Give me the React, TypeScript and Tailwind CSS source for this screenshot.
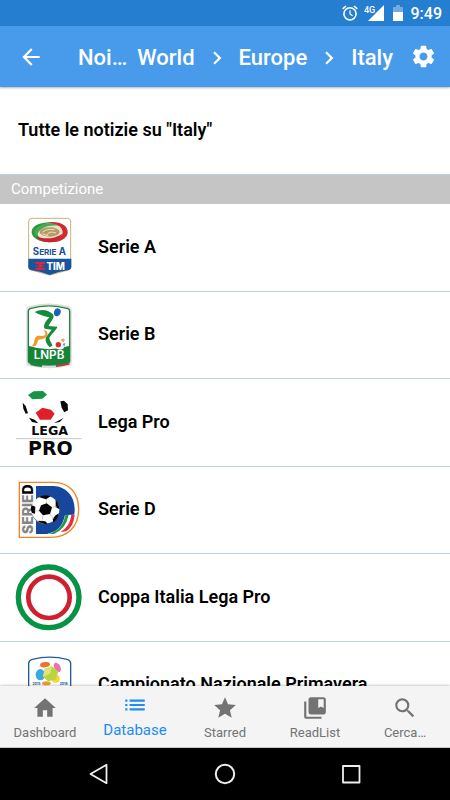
import type { ReactNode } from "react";
import {
  MdArrowBack,
  MdChevronRight,
  MdCollectionsBookmark,
  MdHome,
  MdList,
  MdSearch,
  MdSettings,
  MdStar,
} from "react-icons/md";

function Logo({ children }: { children: ReactNode }) {
  return (
    <svg viewBox="0 0 240 255" className="h-[85px] w-20 shrink-0" aria-hidden="true">
      {children}
    </svg>
  );
}

const LOGO_FONT = "Inter, Roboto, sans-serif";

function SerieALogo() {
  return (
    <Logo>
      <path d="M56 48 Q57 40 66 40 H172 Q181 40 182 48 V188 Q182 193 175 195 L119 210 L63 195 Q56 193 56 188 Z" fill="#fff" stroke="#c9b27a" strokeWidth="3" />
      <path d="M55 161 H184 V187 Q184 193 177 195 Q146 199 119 210 Q92 199 62 195 Q55 193 55 187 Z" fill="#17559f" />
      <ellipse cx="119" cy="82" rx="54" ry="30" fill="#e9e2d0" />
      <path d="M65 82 C64 62 92 51 126 52 C108 57 84 63 81 80 C80 97 98 108 126 111 C92 114 66 101 65 82 Z" fill="#2c9a45" />
      <path d="M84 66 C104 50 146 50 163 66 C148 60 118 59 101 68 C86 77 78 88 84 98 C70 88 71 74 84 66 Z" fill="#46ab50" />
      <path d="M112 52 C150 47 175 62 173 83 C171 104 142 114 112 111 C140 105 158 97 158 81 C157 65 139 55 112 52 Z" fill="#d22832" />
      <path d="M78 92 C98 104 134 103 157 86 C152 105 124 115 102 110 C90 107 82 101 78 92 Z" fill="#c9252f" />
      <ellipse cx="119" cy="81" rx="30" ry="14" fill="#b49b64" />
      <path d="M98 81 Q112 70 134 74 M109 91 Q118 76 138 84 M97 86 L115 93" stroke="#eee2bd" strokeWidth="3" fill="none" />
      <text x="118" y="150" textAnchor="middle" fontFamily={LOGO_FONT} fontWeight="700" fontSize="24" fill="#164f9b">
        <tspan fontSize="29">S</tspan>ERIE<tspan fontSize="29"> A</tspan>
      </text>
      <path d="M76 171 H105 V177 H76 Z M79 181 H102 V185 H79 Z M76 189 H105 V195 H76 Z M87 177 H94 V189 H87 Z" fill="#e0243c" />
      <text x="137" y="194" textAnchor="middle" fontFamily={LOGO_FONT} fontWeight="800" fontSize="29" fill="#fff">TIM</text>
    </Logo>
  );
}

function SerieBLogo() {
  return (
    <Logo>
      <path d="M58 43 Q116 26 176 43 Q182 45 182 52 V210 Q182 215 176 216 Q116 229 58 216 Q52 215 52 209 V52 Q52 45 58 43 Z" fill="#fff" stroke="#dcdcdc" strokeWidth="6" />
      <path d="M60 47 Q116 30 174 47 Q179 49 179 55 V204 Q179 210 173 211 Q116 222 61 211 Q55 210 55 204 V55 Q55 49 60 47 Z" fill="#fff" stroke="#20853d" strokeWidth="4" />
      <path d="M55 158 Q116 179 179 158 V205 Q176 211 168 212 Q116 221 63 211 Q55 209 55 203 Z" fill="#168339" />
      <path d="M74 57 C91 47 114 49 129 64 C136 74 120 88 116 99 L142 101 C140 110 124 123 119 132 C116 140 126 151 127 158 L119 163 C108 152 103 140 110 130 L125 110 L104 107 C98 98 107 84 118 73 C104 70 85 65 74 57 Z" fill="#168a3c" />
      <ellipse cx="142" cy="58" rx="10" ry="12" fill="#1c62ae" transform="rotate(18 142 58)" />
      <path d="M66 159 C76 151 70 137 80 130 C87 126 98 132 104 127 C109 122 104 114 100 111 C115 112 115 125 108 133 C100 141 85 137 83 145 C81 156 76 163 66 159 Z" fill="#f29a28" />
      <circle cx="150" cy="155" r="15" fill="#f7f5f5" />
      <circle cx="145" cy="155" r="8" fill="#d72d36" />
      <path d="M152 141 Q158 132 165 140 L160 148 Z" fill="#f2a35b" />
      <path d="M158 153 L166 150 L163 161 Z" fill="#6096c9" />
      <text x="117" y="199" textAnchor="middle" fontFamily={LOGO_FONT} fontWeight="600" fontSize="35" fill="#fff">LNPB</text>
      <path d="M62 213 Q78 218 96 219" stroke="#168339" strokeWidth="6" fill="none" />
      <path d="M138 219 Q160 218 178 212" stroke="#c8323d" strokeWidth="6" fill="none" />
    </Logo>
  );
}

function LegaProLogo() {
  return (
    <Logo>
      <path d="M54 45 L71 34 L99 33 L111 44 L97 56 L67 58 Z" fill="#169447" />
      <path d="M77 98 L97 83 L123 89 L134 101 L122 119 L90 119 Z" fill="#df202b" />
      <path d="M151 64 L162 62 L173 73 L174 91 L163 97 L155 83 Z" fill="#080808" />
      <path d="M38 68 L47 78 L54 100 L47 101 L40 86 Z" fill="#080808" />
      <path d="M57 113 L74 119 L85 130 L66 126 Z M132 129 L149 120 L160 115 L149 126 Z" fill="#080808" />
      <text x="119" y="166" textAnchor="middle" fontFamily="DejaVu Sans, sans-serif" fontWeight="700" fontSize="38" fill="#080808">LEGA</text>
      <path d="M18 176 H215" stroke="#aaa" strokeWidth="2" />
      <text x="121" y="225" textAnchor="middle" fontFamily="DejaVu Sans, sans-serif" fontWeight="700" fontSize="57" fill="#080808">PRO</text>
    </Logo>
  );
}

function SerieDLogo() {
  return (
    <Logo>
      <path d="M28 43 H131 C178 43 206 76 206 123 C206 176 174 208 122 208 H28 Z" fill="#fff" stroke="#ec8527" strokeWidth="4" />
      <path d="M78 54 H131 C168 56 193 82 194 124 C194 167 166 197 122 198 H78 Z" fill="#17479d" />
      <path d="M111 198 C145 190 158 173 165 141 L194 140 C191 181 160 200 111 198 Z" fill="#fff" />
      <path d="M116 197 Q157 188 166 141 L176 141 Q167 184 131 198 Z" fill="#1d984d" />
      <path d="M151 192 Q179 178 184 141 L194 141 Q190 178 168 190 Z" fill="#e42f42" />
      <text transform="translate(69 198) rotate(-90)" fontFamily={LOGO_FONT} fontWeight="800" fontSize="42" fill="#858585">
        SERIE<tspan fill="#050505">D</tspan>
      </text>
      <circle cx="106" cy="125" r="42" fill="#fff" />
      <path d="M93 112 L110 106 L126 118 L120 138 L99 142 L87 128 Z" fill="#050505" />
      <path d="M86 87 Q103 77 122 85 L108 94 Z M137 95 Q148 107 148 124 L137 117 Z M137 142 L147 136 Q143 155 130 163 L128 152 Z M86 158 L106 160 L113 167 Q96 171 84 163 Z M65 112 L76 116 L75 137 L66 135 Q60 123 65 112 Z" fill="#050505" />
      <path d="M110 106 L108 93 M126 118 L140 116 M120 138 L131 153 M99 142 L96 160 M87 128 L74 129" stroke="#bbb" strokeWidth="2" />
      <path d="M68 146 Q82 168 106 168 Q80 164 65 137 Z" fill="#888" />
    </Logo>
  );
}

function CoppaItaliaLogo() {
  return (
    <Logo>
      <circle cx="116" cy="127" r="91" fill="#fff" stroke="#079344" strokeWidth="16" />
      <circle cx="117" cy="127" r="62" fill="#fff" stroke="#cf2030" strokeWidth="14" />
    </Logo>
  );
}

function PrimaveraLogo() {
  return (
    <Logo>
      <path d="M56 255 V60 Q58 51 67 49 Q119 36 171 49 Q180 51 182 60 V255" fill="#fff" stroke="#225d9b" strokeWidth="4" />
      <ellipse cx="105" cy="65" rx="15" ry="8" fill="#ed722d" transform="rotate(-7 105 65)" />
      <ellipse cx="142" cy="73" rx="9" ry="15" fill="#ec72ad" transform="rotate(-30 142 73)" />
      <ellipse cx="91" cy="95" rx="14" ry="17" fill="#38aadf" />
      <ellipse cx="137" cy="107" rx="12" ry="12" fill="#f5d434" />
      <path d="M104 77 L126 70 L145 86 L136 110 L114 115 L99 101 Z" fill="#b9d440" />
      <path d="M104 77 L126 70 L120 92 L99 101 Z" fill="#dce57c" />
      <ellipse cx="109" cy="121" rx="13" ry="6" fill="#ec9a2a" />
      <text x="79" y="126" textAnchor="middle" fontFamily={LOGO_FONT} fontWeight="700" fontSize="10" fill="#225d9b">2015</text>
      <text x="161" y="126" textAnchor="middle" fontFamily={LOGO_FONT} fontWeight="700" fontSize="10" fill="#225d9b">2016</text>
    </Logo>
  );
}

const competitions = [
  { name: "Serie A", Logo: SerieALogo },
  { name: "Serie B", Logo: SerieBLogo },
  { name: "Lega Pro", Logo: LegaProLogo },
  { name: "Serie D", Logo: SerieDLogo },
  { name: "Coppa Italia Lega Pro", Logo: CoppaItaliaLogo },
  { name: "Campionato Nazionale Primavera", Logo: PrimaveraLogo },
];

const tabs = [
  { label: "Dashboard", icon: MdHome },
  { label: "Database", icon: MdList, active: true },
  { label: "Starred", icon: MdStar },
  { label: "ReadList", icon: MdCollectionsBookmark },
  { label: "Cerca…", icon: MdSearch },
];

function StatusBar() {
  return (
    <div className="flex h-[26px] shrink-0 items-center justify-end bg-[#257ed0] pr-2 text-white">
      <svg viewBox="0 0 16 16" className="size-4" fill="none" stroke="currentColor" aria-hidden="true">
        <circle cx="8" cy="8.8" r="6.1" strokeWidth="1.6" />
        <path d="M8 5.2 V9 L10.6 10.7" strokeWidth="1.2" />
        <path d="M.7 3.8 L4 1 M12 1 L15.3 3.8" strokeWidth="1.6" />
      </svg>
      <svg viewBox="0 0 20 16" className="ml-[6px] h-4 w-5" fill="currentColor" aria-hidden="true">
        <path d="M20 0 V16 H4 Z" />
        <text x="0" y="8" fontFamily="Roboto, sans-serif" fontWeight="500" fontSize="9">4G</text>
      </svg>
      <svg viewBox="0 0 10 16" className="ml-[9px] h-4 w-[10px]" fill="currentColor" aria-hidden="true">
        <path d="M3 0 H7 V2 H10 V7 H0 V2 H3 Z" opacity=".35" />
        <path d="M0 7 H10 V16 H0 Z" />
      </svg>
      <span className="ml-2 pt-[2px] text-base font-medium">9:49</span>
    </div>
  );
}

function Header() {
  return (
    <header className="relative z-10 flex h-[61px] shrink-0 items-center bg-[#489bea] pr-[13px] pl-[18px] text-white shadow-[0_1px_2px_rgba(0,0,0,0.3)]">
      <button type="button" aria-label="Indietro">
        <MdArrowBack size={26} />
      </button>
      <nav className="ml-auto flex items-center pt-[2px] text-[22px] leading-[26px] font-medium">
        <a href="#notizie" className="mr-[10px]">Noi…</a>
        <a href="#world">World</a>
        <MdChevronRight size={26} className="mx-[9px]" />
        <a href="#europe">Europe</a>
        <MdChevronRight size={26} className="mx-[9px]" />
        <a href="#italy">Italy</a>
      </nav>
      <button type="button" aria-label="Impostazioni" className="ml-[17px]">
        <MdSettings size={27} />
      </button>
    </header>
  );
}

function TabBar() {
  return (
    <nav className="relative z-10 grid h-[62px] shrink-0 grid-cols-5 border-b border-[#c8c8c8] bg-[#f4f4f4] shadow-[0_-1px_2px_rgba(0,0,0,0.2)]">
      {tabs.map(({ label, icon: Icon, active }) => (
        <a
          key={label}
          href={`#${label.toLowerCase()}`}
          className={
            active
              ? "flex flex-col items-center gap-px pt-[6px] text-[15px] leading-[22px] text-[#1e8cf0]"
              : "flex flex-col items-center gap-px pt-[9px] text-[13px] leading-[22px] text-[#737373]"
          }
        >
          <Icon size={26} />
          {label}
        </a>
      ))}
    </nav>
  );
}

function SystemNav() {
  return (
    <div className="flex h-[52px] shrink-0 items-center justify-center gap-[104px] bg-black text-[#eee]">
      <button type="button" aria-label="Back">
        <svg viewBox="0 0 22 22" className="size-[22px]" fill="none" stroke="currentColor" strokeWidth="1.8" strokeLinejoin="round">
          <path d="M18.5 1.8 V20.2 L2.5 11 Z" />
        </svg>
      </button>
      <button type="button" aria-label="Home">
        <svg viewBox="0 0 22 22" className="size-[22px]" fill="none" stroke="currentColor" strokeWidth="2">
          <circle cx="11" cy="11" r="9.2" />
        </svg>
      </button>
      <button type="button" aria-label="Recents">
        <svg viewBox="0 0 22 22" className="size-[22px]" fill="none" stroke="currentColor" strokeWidth="1.8" strokeLinejoin="round">
          <rect x="3" y="3" width="16.5" height="16.5" />
        </svg>
      </button>
    </div>
  );
}

export default function App() {
  return (
    <div className="flex h-screen flex-col overflow-hidden bg-white font-[Roboto,sans-serif]">
      <StatusBar />
      <Header />

      <main className="min-h-0 flex-1 overflow-hidden text-lg font-semibold text-black">
        <a href="#italy-news" className="flex h-[88px] items-center border-b border-[#bccfe4] px-[18px] pb-[2px]">
          Tutte le notizie su "Italy"
        </a>
        <h2 className="flex h-[29px] items-center bg-[#c5c5c5] px-[11px] text-[15px] font-normal text-white">
          Competizione
        </h2>
        <ul>
          {competitions.map(({ name, Logo: CompetitionLogo }) => (
            <li key={name} className="h-[88px] border-b border-[#bccfe4] even:h-[87px]">
              <a href={`#${name.toLowerCase().replaceAll(" ", "-")}`} className="flex h-full items-center gap-2 pl-[10px]">
                <CompetitionLogo />
                <span className="pb-[2px]">{name}</span>
              </a>
            </li>
          ))}
        </ul>
      </main>

      <TabBar />
      <SystemNav />
    </div>
  );
}
